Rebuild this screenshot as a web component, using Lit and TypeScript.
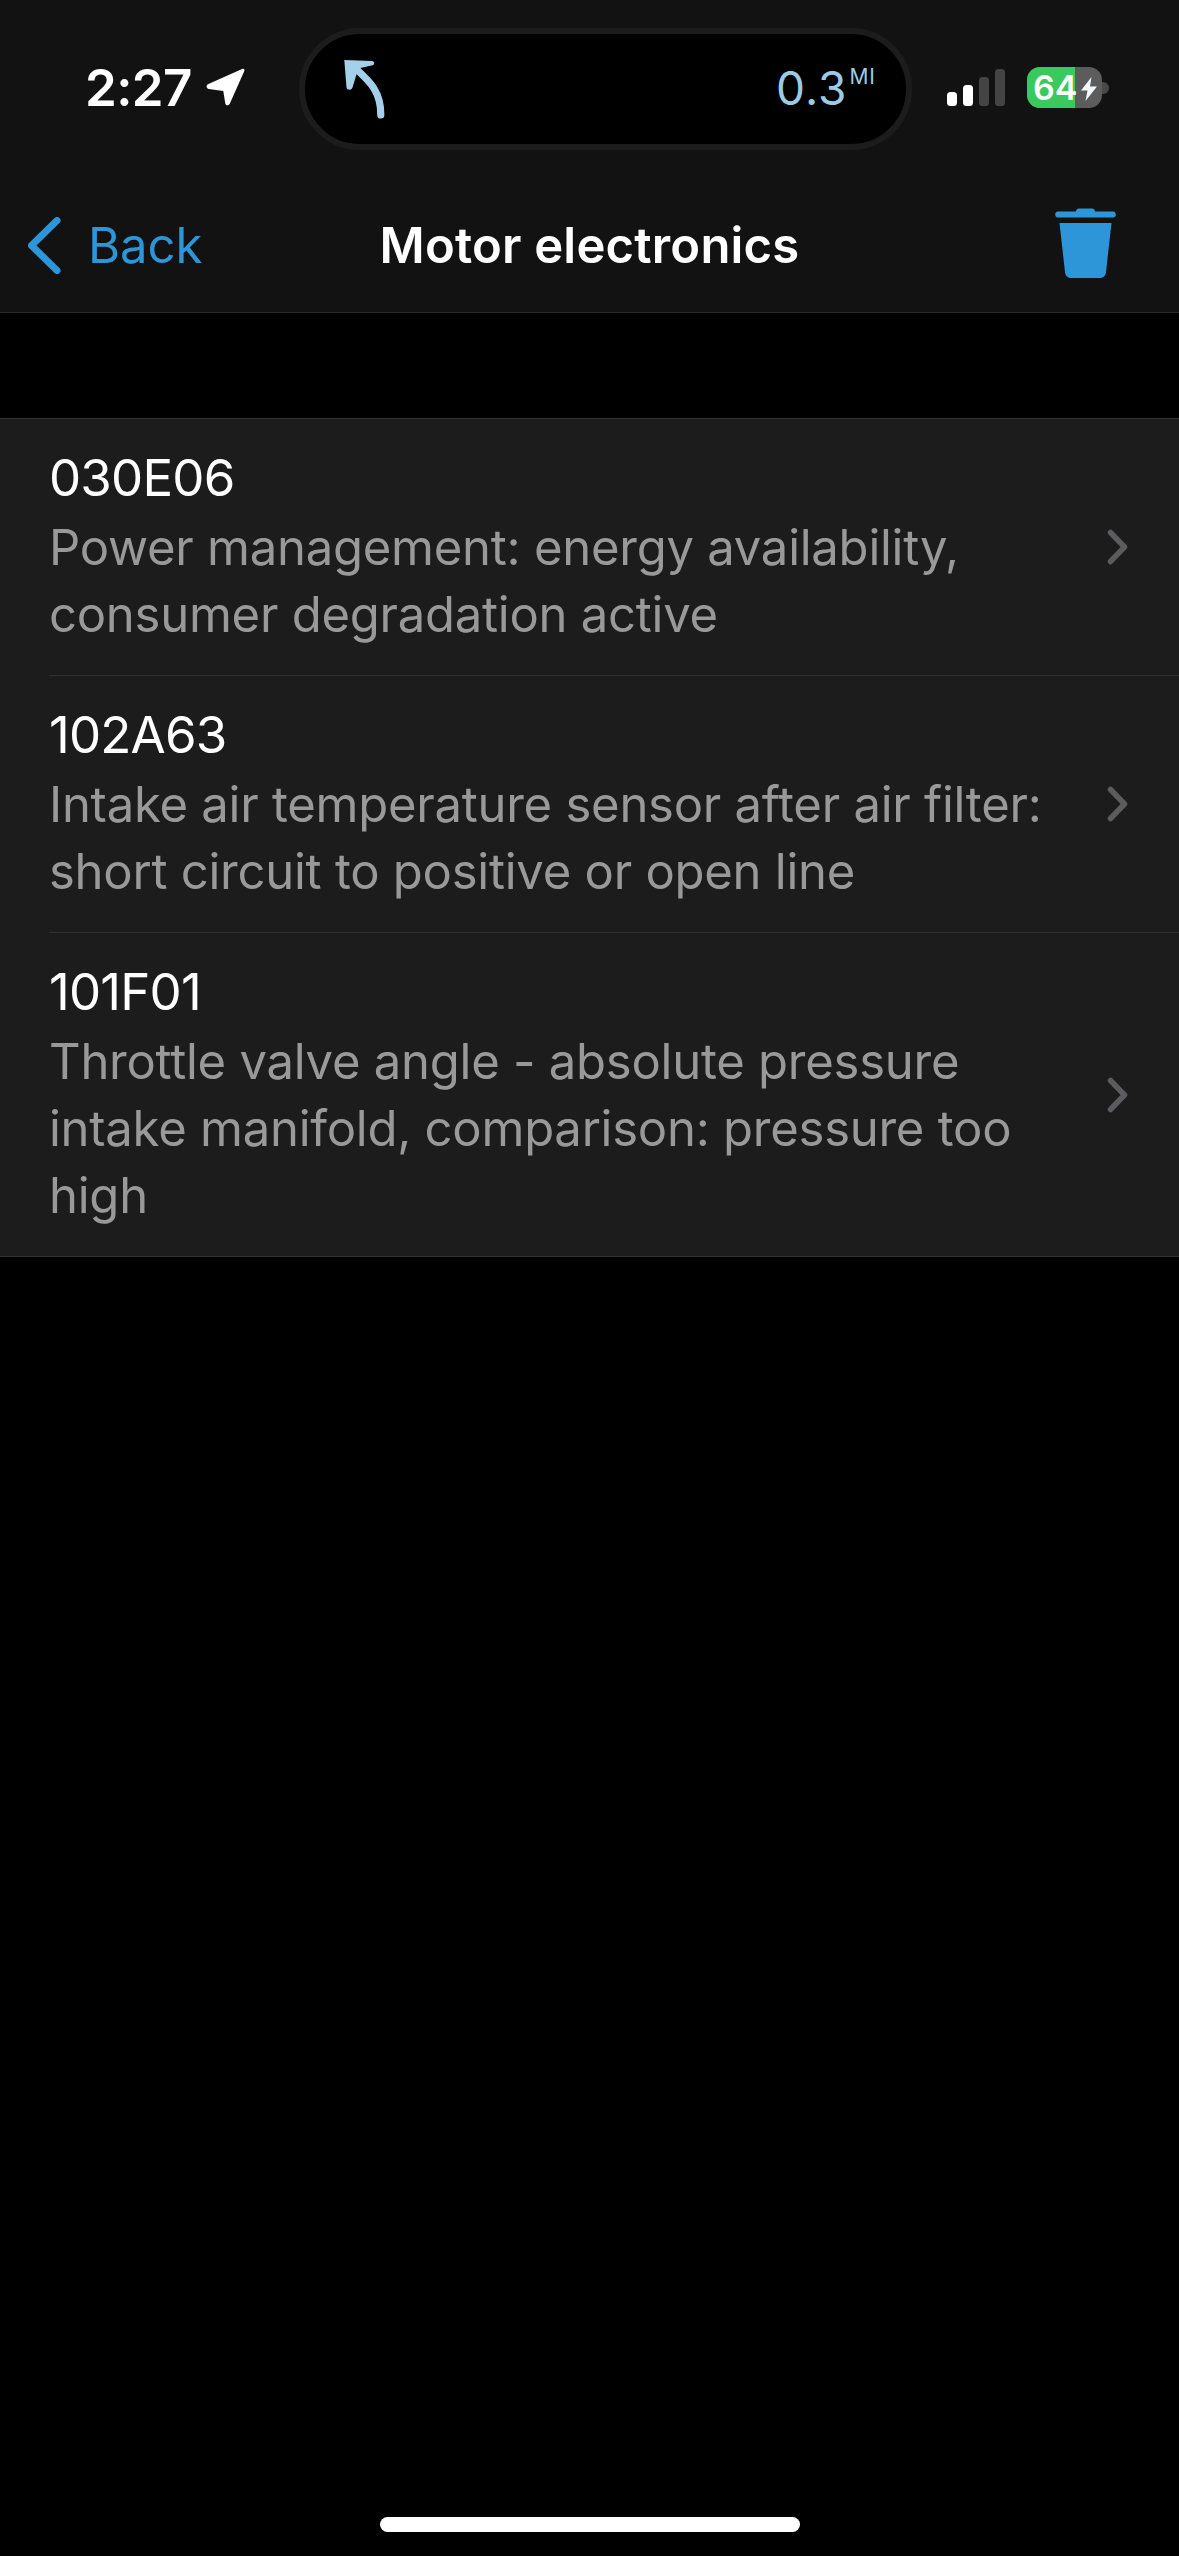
import { LitElement, html, css } from "lit";
import { customElement } from "lit/decorators.js";

const rows = [
  { code: "030E06", lines: ["Power management: energy availability,", "consumer degradation active"] },
  { code: "102A63", lines: ["Intake air temperature sensor after air filter:", "short circuit to positive or open line"] },
  { code: "101F01", lines: ["Throttle valve angle - absolute pressure", "intake manifold, comparison: pressure too", "high"] },
];

@customElement("app-root")
export class AppRoot extends LitElement {
  static styles = css`
    :host { display: flex; flex-direction: column; width: 1179px; height: 2556px; background: #000; overflow: hidden;
      font-family: Inter, "Liberation Sans", sans-serif; color: #fff; }
    .head { height: 312px; flex: none; background: #121212; border-bottom: 1px solid #2a2a2a; display: flex; flex-direction: column; }
    .status { height: 150px; padding-top: 28px; box-sizing: border-box; display: flex; align-items: flex-start; flex: none; }
    .time { width: 299px; flex: none; height: 122px; display: flex; align-items: center; padding: 0 0 3px 85px; box-sizing: border-box; gap: 14px; font-size: 51px; font-weight: 600; letter-spacing: -0.6px; }
    .time svg { width: 39px; height: 39px; flex: none; }
    .island { width: 613px; height: 122px; flex: none; box-sizing: border-box; background: #000; border: 6px solid #1c1c1c; border-radius: 61px; display: flex; align-items: center; justify-content: space-between; padding: 0 30px 0 39px; }
    .island svg { width: 41px; height: 60px; flex: none; }
    .dist { color: #9ccbe6; font-size: 46px; font-weight: 400; letter-spacing: 1px; display: flex; align-items: flex-start; line-height: 1; padding-bottom: 3px; }
    .dist span { font-size: 21px; margin: 1px 0 0 2px; line-height: 1; letter-spacing: 1px; }
    .sys { flex: 1; height: 122px; display: flex; align-items: center; padding: 0 0 3px 35px; box-sizing: border-box; }
    .sig { width: 58px; height: 37px; flex: none; }
    .batt { margin-left: 22px; width: 75px; height: 41px; flex: none; border-radius: 13px; overflow: hidden; display: flex; position: relative; background: #5c5c5c; }
    .fill { width: 48px; background: #3ac95c; }
    .num { position: absolute; left: 6px; top: 0; line-height: 41px; font-size: 34px; font-weight: 600; }
    .batt svg { position: absolute; left: 54px; top: 10px; width: 16px; height: 24px; }
    .nub { width: 7px; height: 12px; background: #4a4a4a; border-radius: 0 6px 6px 0; flex: none; }
    .nav { flex: 1; display: grid; grid-template-columns: 1fr auto 1fr; align-items: center; padding-top: 28px; }
    .back { display: flex; align-items: center; gap: 27px; color: #2d96d8; font-size: 49px; padding-left: 28px; }
    .back svg { width: 33px; height: 57px; flex: none; }
    .title { font-size: 49px; font-weight: 600; text-align: center; letter-spacing: 0.2px; }
    .trash { width: 61px; height: 70px; justify-self: end; margin: 0 63px 4px 0; }
    .list { margin-top: 105px; flex: none; background: #1c1c1c; border-top: 1px solid #333; border-bottom: 1px solid #333; }
    .row { padding-left: 49px; }
    .inner { display: flex; align-items: center; border-bottom: 1px solid #303030; padding: 22px 51px 27px 0; }
    .row:last-child .inner { border-bottom: 0; }
    .text { flex: 1; min-width: 0; }
    .code { font-size: 51px; line-height: 73px; font-weight: 400; letter-spacing: -0.8px; }
    .desc { font-size: 49px; line-height: 67px; color: #999; white-space: nowrap; letter-spacing: -0.25px; }
    .chev { width: 21px; height: 36px; flex: none; margin-top: 5px; }
    .home { width: 420px; height: 15px; flex: none; border-radius: 8px; background: #fff; margin: auto auto 24px; }
  `;

  render() {
    return html`
      <div class="head">
        <div class="status">
          <div class="time"><span>2:27</span>
            <svg viewBox="0 0 40 40"><path d="M37 1 C38.700 0.200 40 1.500 39.300 3.200 L24.500 36.500 C23.300 39 20.300 38.800 19.800 36.300 L17.700 23.700 L3 21.500 C0 21 -0.300 17.500 2.500 16.300 Z" fill="#fff"/></svg>
          </div>
          <div class="island">
            <svg viewBox="0 0 41 60">
              <path d="M12 10 C25 22 37 32 36.800 56" fill="none" stroke="#a5d0ea" stroke-width="7.200" stroke-linecap="round"/>
              <path d="M0.300 1 L28 2 C30.800 2.300 31 5.500 28.500 6.300 L14.300 9.500 L8.500 28.500 C7.500 31.500 3 31.500 2.500 28.500 Z" fill="#a5d0ea"/>
            </svg>
            <div class="dist">0.3<span>MI</span></div>
          </div>
          <div class="sys">
            <svg class="sig" viewBox="0 0 58 37">
              <rect x="0" y="23" width="10" height="14" rx="3.500" fill="#fff"/>
              <rect x="16" y="16" width="10" height="21" rx="3.500" fill="#fff"/>
              <rect x="32" y="8" width="10" height="29" rx="3.500" fill="#444"/>
              <rect x="48" y="0" width="10" height="37" rx="3.500" fill="#444"/>
            </svg>
            <div class="batt"><div class="fill"></div><div class="num">64</div>
              <svg viewBox="0 0 16 24"><path d="M10.500 0 L0 13.500 H6.500 L4.500 24 L16 9.500 H9 Z" fill="#f4f8fb"/></svg>
            </div>
            <div class="nub"></div>
          </div>
        </div>
        <div class="nav">
          <div class="back">
            <svg viewBox="0 0 33 57"><path d="M29 3.500 L3.500 28.500 L29 53.500" fill="none" stroke="#2d96d8" stroke-width="7" stroke-linecap="round" stroke-linejoin="round"/></svg>
            <span>Back</span>
          </div>
          <div class="title">Motor electronics</div>
          <svg class="trash" viewBox="0 0 61 70">
            <path d="M21 3.500 C21 1.500 22.500 0.500 24 0.500 H37 C38.500 0.500 40 1.500 40 3.500 H58 C61.800 3.500 61.800 9.500 58 9.500 H3 C-0.800 9.500 -0.800 3.500 3 3.500 Z" fill="#2d96d8"/>
            <path d="M4.500 15 H56.500 L51 64 C50.700 67.500 48.500 70 45 70 H16 C12.500 70 10.300 67.500 10 64 Z" fill="#2d96d8"/>
          </svg>
        </div>
      </div>
      <div class="list">
        ${rows.map(
          (r) => html`<div class="row"><div class="inner">
            <div class="text">
              <div class="code">${r.code}</div>
              ${r.lines.map((l) => html`<div class="desc">${l}</div>`)}
            </div>
            <svg class="chev" viewBox="0 0 21 36"><path d="M3.500 3.500 L17.500 18 L3.500 32.500" fill="none" stroke="#5c5c5e" stroke-width="5.500" stroke-linecap="round" stroke-linejoin="round"/></svg>
          </div></div>`
        )}
      </div>
      <div class="home"></div>
    `;
  }
}
